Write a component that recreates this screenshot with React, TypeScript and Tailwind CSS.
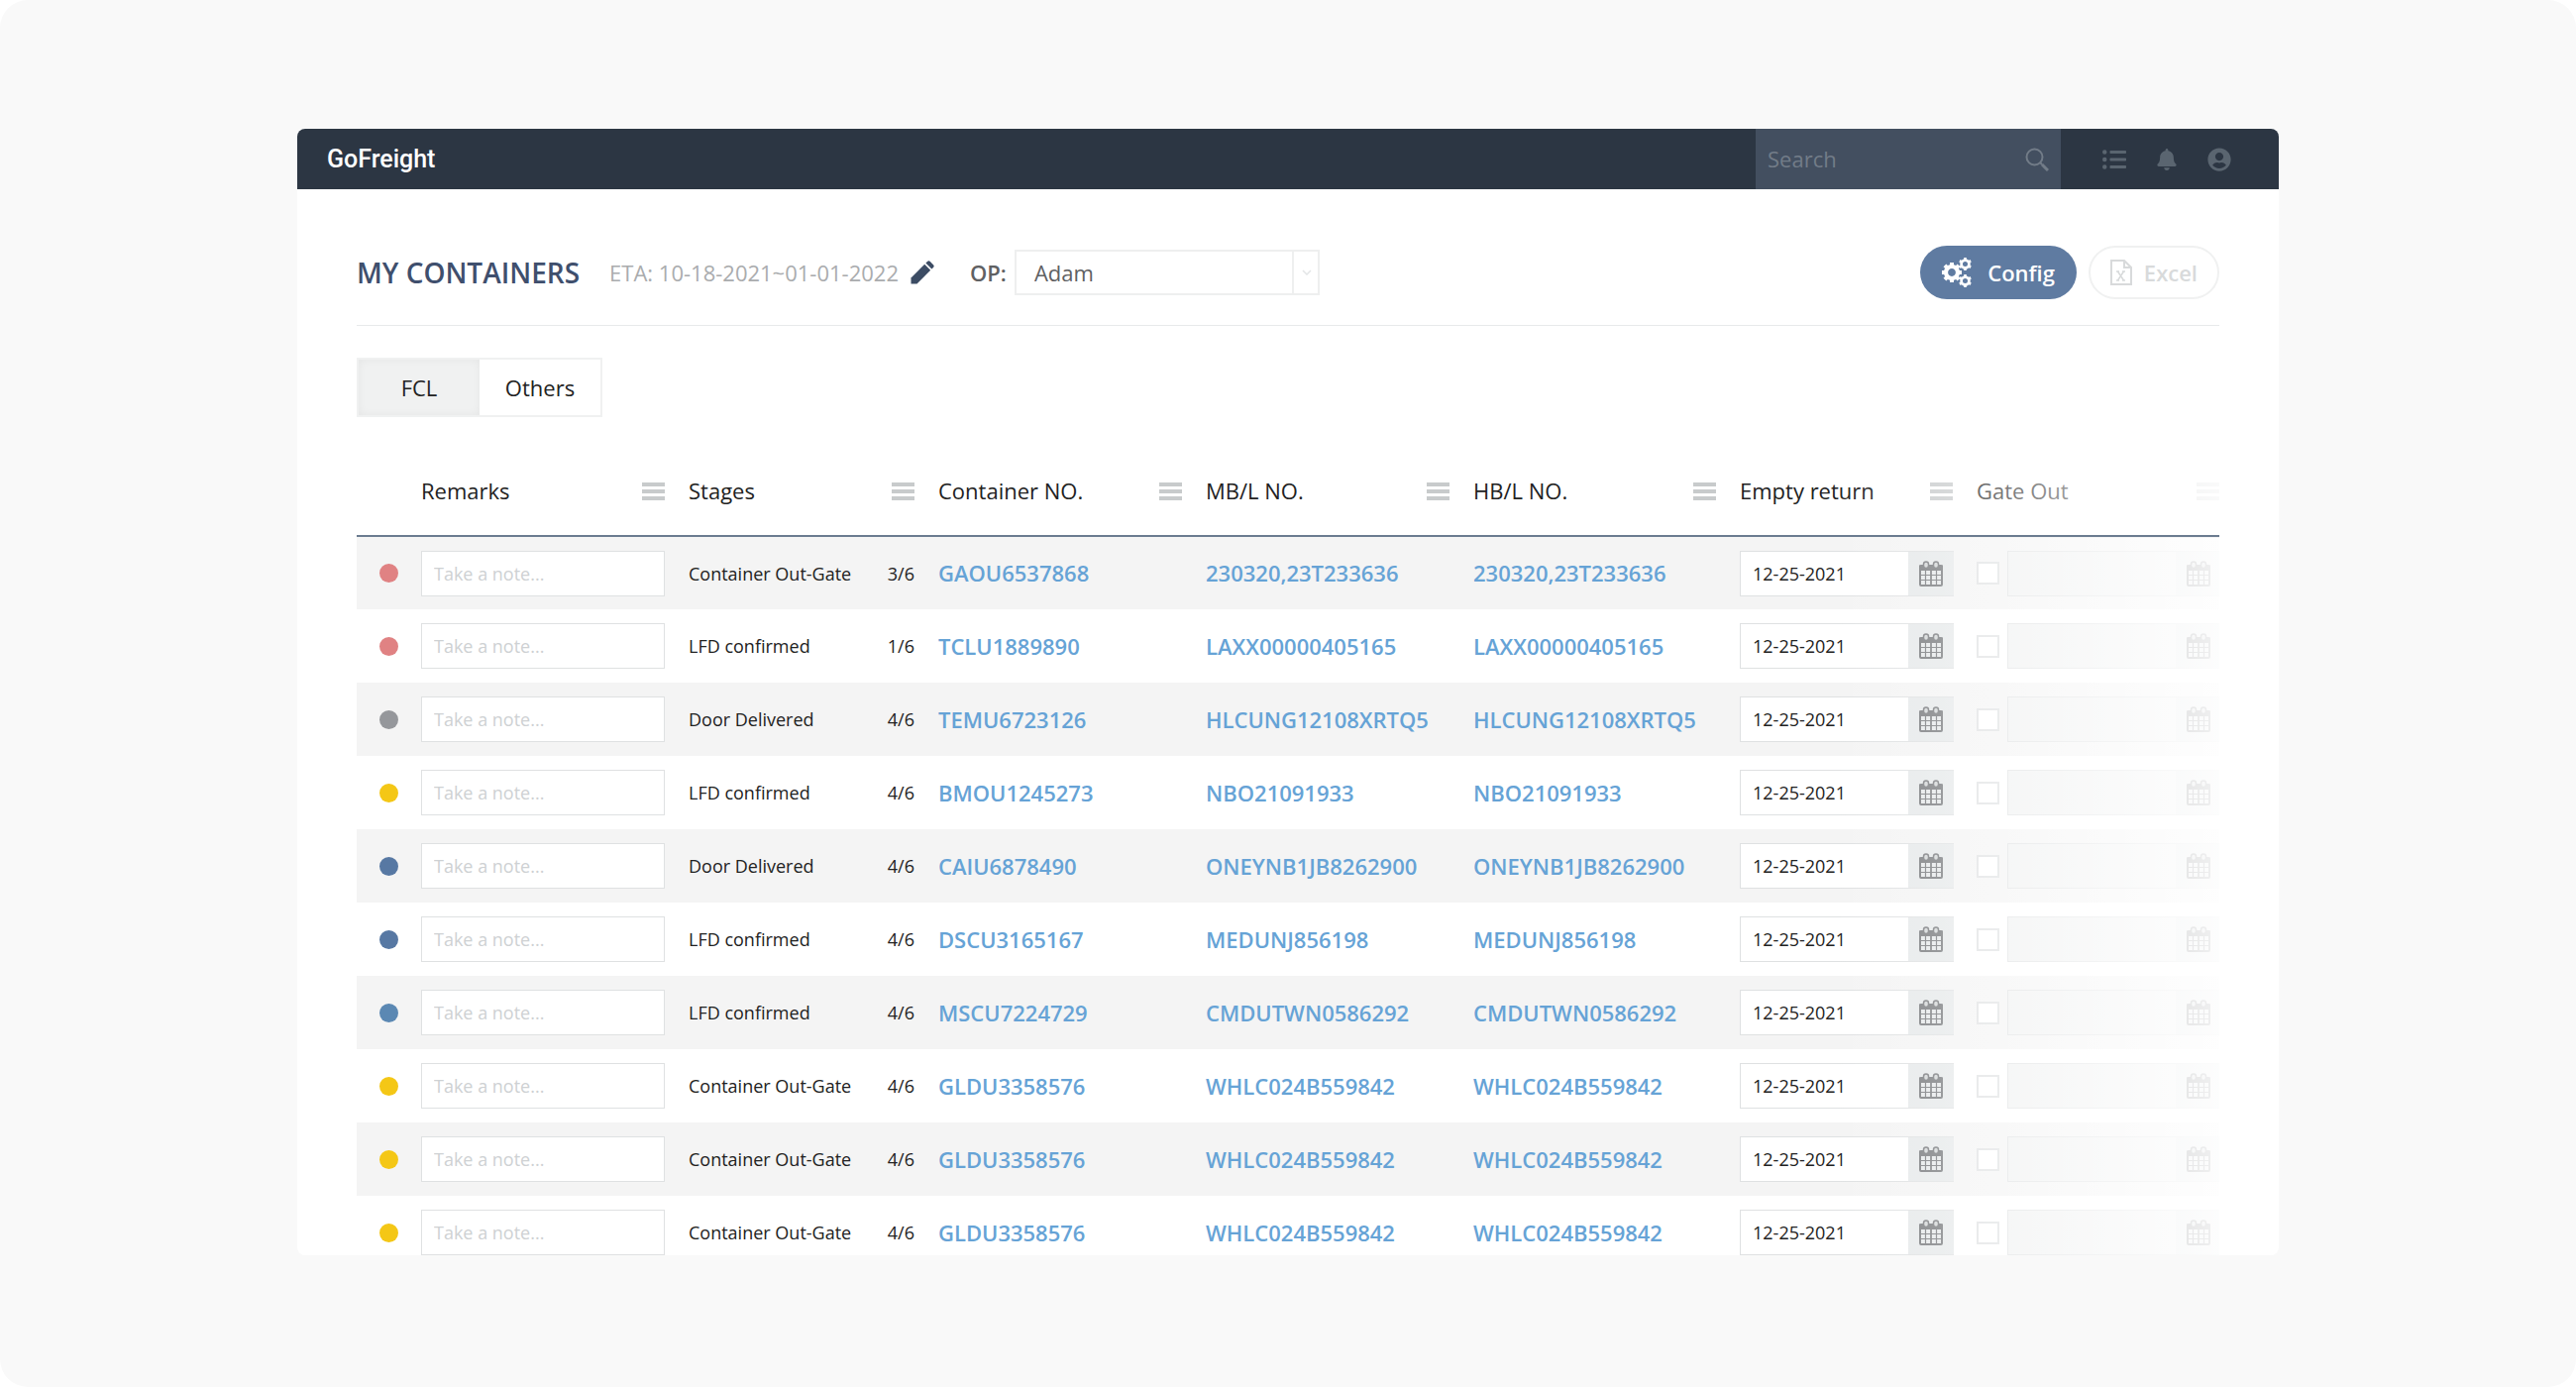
import { FaBell, FaListUl, FaUserCircle } from "react-icons/fa";

type Row = {
  dot: string;
  stage: string;
  progress: string;
  container: string;
  bl: string;
};

const RED = "bg-[#e08283]";
const GRAY = "bg-[#95979b]";
const YELLOW = "bg-[#f4c716]";
const BLUE = "bg-[#5778a3]";
const LIGHT_BLUE = "bg-[#5b88b3]";

const rows: Row[] = [
  { dot: RED, stage: "Container Out-Gate", progress: "3/6", container: "GAOU6537868", bl: "230320,23T233636" },
  { dot: RED, stage: "LFD confirmed", progress: "1/6", container: "TCLU1889890", bl: "LAXX00000405165" },
  { dot: GRAY, stage: "Door Delivered", progress: "4/6", container: "TEMU6723126", bl: "HLCUNG12108XRTQ5" },
  { dot: YELLOW, stage: "LFD confirmed", progress: "4/6", container: "BMOU1245273", bl: "NBO21091933" },
  { dot: BLUE, stage: "Door Delivered", progress: "4/6", container: "CAIU6878490", bl: "ONEYNB1JB8262900" },
  { dot: BLUE, stage: "LFD confirmed", progress: "4/6", container: "DSCU3165167", bl: "MEDUNJ856198" },
  { dot: LIGHT_BLUE, stage: "LFD confirmed", progress: "4/6", container: "MSCU7224729", bl: "CMDUTWN0586292" },
  { dot: YELLOW, stage: "Container Out-Gate", progress: "4/6", container: "GLDU3358576", bl: "WHLC024B559842" },
  { dot: YELLOW, stage: "Container Out-Gate", progress: "4/6", container: "GLDU3358576", bl: "WHLC024B559842" },
  { dot: YELLOW, stage: "Container Out-Gate", progress: "4/6", container: "GLDU3358576", bl: "WHLC024B559842" },
];

const columns = ["Remarks", "Stages", "Container NO.", "MB/L NO.", "HB/L NO.", "Empty return", "Gate Out"];

function SearchIcon() {
  return (
    <svg viewBox="0 0 24 24" className="size-6" fill="none" stroke="currentColor" strokeWidth="2">
      <circle cx="9.500" cy="9.500" r="8" />
      <path d="M15 15l2 2" />
      <path d="M17 17l6 6" strokeWidth="3" />
    </svg>
  );
}

function PencilIcon() {
  return (
    <svg viewBox="0 0 24 24" className="size-6" fill="currentColor">
      <path d="M0.500 23.500v-6L14.200 3.800l6 6L6.500 23.500z" />
      <path d="M15.400 2.600l1.600-1.600a2 2 0 0 1 2.800 0l3.200 3.200a2 2 0 0 1 0 2.800l-1.600 1.600z" />
    </svg>
  );
}

function Gear({ cx, cy, r, teeth }: { cx: number; cy: number; r: number; teeth: number }) {
  return (
    <g transform={`translate(${cx} ${cy})`}>
      <circle r={r * 0.6} strokeWidth={r * 0.42} fill="none" stroke="currentColor" />
      {Array.from({ length: teeth }, (_, i) => (
        <rect
          key={i}
          x={-r * 0.2}
          y={-r}
          width={r * 0.4}
          height={r * 0.34}
          fill="currentColor"
          transform={`rotate(${(360 / teeth) * i})`}
        />
      ))}
    </g>
  );
}

function GearsIcon() {
  return (
    <svg viewBox="0 0 30 30" className="size-[30px]">
      <Gear cx={10} cy={15} r={10} teeth={8} />
      <Gear cx={23.5} cy={6.5} r={6.5} teeth={6} />
      <Gear cx={23.5} cy={23.5} r={6.5} teeth={6} />
    </svg>
  );
}

function ExcelIcon() {
  return (
    <svg viewBox="0 0 22 26" className="h-[26px] w-[22px]" fill="none" stroke="currentColor" strokeWidth="2">
      <path d="M1 1h13l7 7v17H1z" />
      <path d="M14 1v7h7" />
      <path d="M7.500 12l6 9M13.500 12l-6 9M6 12h3M12 12h3M6 21h3M12 21h3" strokeWidth="1.500" />
    </svg>
  );
}

function MenuIcon() {
  return (
    <svg viewBox="0 0 23 18" className="h-[18px] w-[23px] shrink-0" stroke="#c8cbcc" strokeWidth="4">
      <path d="M0 2h23M0 9h23M0 16h23" />
    </svg>
  );
}

function CalendarIcon() {
  return (
    <svg viewBox="0 0 24 26" className="h-[26px] w-6" fill="none" stroke="currentColor">
      <rect x="1" y="5" width="22" height="20" rx="1" strokeWidth="2" />
      <path d="M0 4.500h24V10H0z" fill="currentColor" stroke="none" />
      <rect x="4.500" y="1" width="5" height="6.500" rx="2.500" fill="#d4d7d8" strokeWidth="1.500" />
      <rect x="14.500" y="1" width="5" height="6.500" rx="2.500" fill="#d4d7d8" strokeWidth="1.500" />
      <path d="M1 14.500h22M1 19.500h22M6.500 10v15M17.500 10v15" strokeWidth="1.200" />
      <path d="M12 9v16" strokeWidth="1.800" />
    </svg>
  );
}

function DateField({ label, value, disabled }: { label: string; value?: string; disabled?: boolean }) {
  return (
    <div className="flex h-[46px] w-[216px] shrink-0 border border-r-0 border-[#dfe1e2]">
      <input
        type="text"
        aria-label={label}
        defaultValue={value}
        disabled={disabled}
        className="min-w-0 flex-1 bg-white px-3 text-lg text-[#222] disabled:bg-[#f0f1f1]"
      />
      <button
        type="button"
        aria-label={`Pick ${label}`}
        disabled={disabled}
        className="flex w-[46px] shrink-0 items-center justify-center bg-[#e6e9ea] text-[#77797c]"
      >
        <CalendarIcon />
      </button>
    </div>
  );
}

function TopBar() {
  return (
    <header className="flex h-[61px] items-center bg-[#2c3643] pr-12 pl-[30px]">
      <a href="#" className="font-[Roboto,sans-serif] text-[25px] font-medium text-white">
        GoFreight
      </a>
      <label className="ml-auto flex h-full w-[308px] items-center bg-[#434f60] px-3 text-[#727c88]">
        <input
          type="search"
          aria-label="Search"
          placeholder="Search"
          className="min-w-0 flex-1 bg-transparent text-[22px] placeholder:text-[#727c88]"
        />
        <SearchIcon />
      </label>
      <nav className="ml-[42px] flex items-center gap-[30px] text-[#5a6570]">
        <button type="button" aria-label="Tasks">
          <FaListUl className="size-6" />
        </button>
        <button type="button" aria-label="Notifications">
          <FaBell className="size-[22px]" />
        </button>
        <button type="button" aria-label="Account">
          <FaUserCircle className="size-6" />
        </button>
      </nav>
    </header>
  );
}

function PageHeader() {
  return (
    <div className="flex items-center border-b border-[#e8eaeb] pb-[26px]">
      <h1 className="text-[28px] leading-9 font-semibold text-[#3f4f6d]">MY CONTAINERS</h1>
      <span className="ml-[30px] text-[22px] text-[#aaacae]">ETA: 10-18-2021~01-01-2022</span>
      <button type="button" aria-label="Edit ETA range" className="ml-3 text-[#3c4c64]">
        <PencilIcon />
      </button>
      <label htmlFor="op" className="ml-9 text-[22px] font-semibold text-[#5f6163]">
        OP:
      </label>
      <div className="relative ml-2 w-[308px]">
        <select
          id="op"
          className="h-[46px] w-full appearance-none border-2 border-[#eeefef] bg-white pl-[18px] text-[22px] text-[#5f6163]"
        >
          <option>Adam</option>
        </select>
        <span className="pointer-events-none absolute inset-y-0 right-0 flex w-7 items-center justify-center border-l-2 border-[#eeefef] text-[#e3e5e6]">
          <svg viewBox="0 0 10 6" className="h-1.5 w-2.5" fill="none" stroke="currentColor" strokeWidth="1.500">
            <path d="M1 1l4 4 4-4" />
          </svg>
        </span>
      </div>
      <button
        type="button"
        className="ml-auto flex h-[54px] items-center gap-4 rounded-full bg-[#5f7ba1] px-[22px] text-[22px] font-semibold text-white"
      >
        <GearsIcon />
        Config
      </button>
      <button
        type="button"
        className="ml-3 flex h-[54px] items-center gap-3 rounded-full border-2 border-[#f0f1f1] px-5 text-[22px] font-semibold text-[#d8dadb]"
      >
        <ExcelIcon />
        Excel
      </button>
    </div>
  );
}

function ContainerTable() {
  return (
    <div className="relative overflow-hidden">
      <table className="w-full table-fixed text-left">
        <colgroup>
          <col className="w-[65px]" />
          <col className="w-[270px]" />
          <col className="w-[252px]" />
          <col className="w-[270px]" />
          <col className="w-[270px]" />
          <col className="w-[269px]" />
          <col className="w-[239px]" />
          <col className="w-[245px]" />
        </colgroup>
        <thead>
          <tr className="h-[90px] border-b-2 border-[#6b7c90]">
            <td />
            {columns.map((name) => (
              <th key={name} scope="col" className="pr-6 font-normal last:pr-0">
                <div className="flex items-center justify-between text-[22px] text-[#222]">
                  {name}
                  <MenuIcon />
                </div>
              </th>
            ))}
          </tr>
        </thead>
        <tbody>
          {rows.map((row, i) => (
            <tr key={i} className="h-[74px] odd:bg-[#f4f4f4]">
              <td>
                <span className={`mx-auto block size-[19px] rounded-full ${row.dot}`} />
              </td>
              <td className="pr-6">
                <input
                  type="text"
                  aria-label={`Note for ${row.container}`}
                  placeholder="Take a note..."
                  className="block h-[46px] w-full border border-[#dfe1e2] bg-white px-3 text-lg placeholder:text-[#ced1d3]"
                />
              </td>
              <td className="pr-6">
                <div className="flex justify-between text-lg text-[#222]">
                  <span>{row.stage}</span>
                  <span>{row.progress}</span>
                </div>
              </td>
              {[row.container, row.bl, row.bl].map((text, j) => (
                <td key={j} className="text-[22px] font-semibold text-[#66a3d6]">
                  <a href="#">{text}</a>
                </td>
              ))}
              <td>
                <DateField label="empty return date" value="12-25-2021" />
              </td>
              <td>
                <div className="flex items-center gap-2">
                  <input
                    type="checkbox"
                    aria-label="Gate out"
                    className="size-[23px] shrink-0 appearance-none border-2 border-[#dfe1e2] bg-white"
                  />
                  <DateField label="gate out date" disabled />
                </div>
              </td>
            </tr>
          ))}
        </tbody>
      </table>
      {/* fade out the right edge, leaving the header rule visible */}
      <div className="pointer-events-none absolute top-0 right-0 h-[88px] w-[390px] bg-linear-to-r from-white/0 to-white/90" />
      <div className="pointer-events-none absolute top-[92px] right-0 bottom-0 w-[390px] bg-linear-to-r from-white/0 to-white/90" />
    </div>
  );
}

export default function App() {
  return (
    <div className="min-h-screen bg-white font-['Open_Sans',sans-serif]">
      <div className="min-h-screen rounded-[28px] bg-[#f9f9f9] px-[300px] py-[130px]">
        <div className="overflow-hidden rounded-lg bg-white">
          <TopBar />
          <main className="-mb-3.5 px-[60px] pt-[57px]">
            <PageHeader />
            <div className="mt-8 flex w-[248px] border-2 border-[#f0f1f1] text-[22px] text-[#222]">
              <button
                type="button"
                aria-pressed="true"
                className="h-14 flex-1 bg-[#f0f1f1] shadow-[inset_0_0_8px_rgba(0,0,0,0.05)]"
              >
                FCL
              </button>
              <button type="button" aria-pressed="false" className="h-14 flex-1">
                Others
              </button>
            </div>
            <div className="mt-[30px]">
              <ContainerTable />
            </div>
          </main>
        </div>
      </div>
    </div>
  );
}
